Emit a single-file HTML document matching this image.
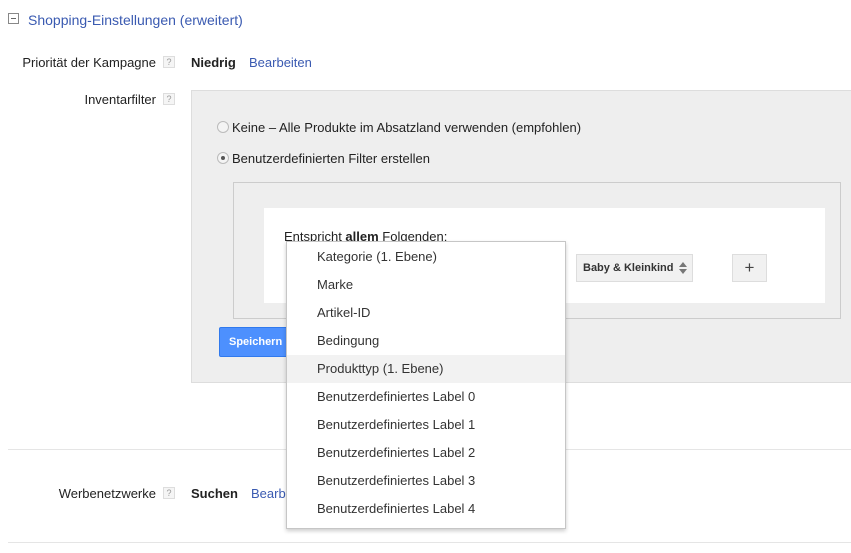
<!DOCTYPE html>
<html><head><meta charset="utf-8"><style>
*{margin:0;padding:0;box-sizing:border-box}
body{width:851px;height:553px;background:#fff;font-family:"Liberation Sans",Arial,sans-serif;font-size:13px;color:#222;position:relative;overflow:hidden}
.a{position:absolute;white-space:nowrap}
.q{position:absolute;width:12px;height:12px;border:1px solid #ddd;background:#f5f5f5;color:#999;font-size:9px;line-height:10px;text-align:center}
.lbl{position:absolute;right:695px;white-space:nowrap}
.blue{color:#3a5ab1}
.dd div{height:28px;line-height:28px;padding-left:30px;font-size:13px;color:#333}
</style></head><body>
<div class="a" style="left:8px;top:13px;width:11px;height:11px;border:1px solid #888;"><div style="position:absolute;left:2px;top:4px;width:5px;height:1px;background:#666"></div></div>
<div class="a blue" style="left:28px;top:12px;font-size:14px">Shopping-Einstellungen (erweitert)</div>

<div class="lbl" style="top:55px">Priorität der Kampagne</div>
<div class="q" style="left:163px;top:56px">?</div>
<div class="a" style="left:191px;top:55px;font-weight:bold">Niedrig</div>
<div class="a blue" style="left:249px;top:55px">Bearbeiten</div>

<div class="lbl" style="top:92px">Inventarfilter</div>
<div class="q" style="left:163px;top:93px">?</div>

<div class="a" style="left:191px;top:90px;width:670px;height:293px;background:#eee;border:1px solid #ddd"></div>
<div class="a" style="left:217px;top:121px;width:12px;height:12px;border-radius:50%;border:1px solid #bbb;background:#f4f4f4"></div>
<div class="a" style="left:232px;top:120px">Keine – Alle Produkte im Absatzland verwenden (empfohlen)</div>
<div class="a" style="left:217px;top:152px;width:12px;height:12px;border-radius:50%;border:1px solid #bbb;background:#f4f4f4"><div style="position:absolute;left:3px;top:3px;width:4px;height:4px;border-radius:50%;background:#555"></div></div>
<div class="a" style="left:232px;top:151px">Benutzerdefinierten Filter erstellen</div>

<div class="a" style="left:233px;top:182px;width:608px;height:137px;border:1px solid #ccc;background:#eee"></div>
<div class="a" style="left:264px;top:208px;width:561px;height:95px;background:#fff"></div>
<div class="a" style="left:284px;top:229px">Entspricht <b>allem</b> Folgenden:</div>
<div class="a" style="left:576px;top:254px;width:117px;height:28px;background:#f1f1f1;border:1px solid #ddd;font-size:11px;font-weight:bold;line-height:26px;padding-left:6px;color:#333">Baby &amp; Kleinkind</div>
<svg class="a" style="left:679px;top:262px" width="8" height="12"><path d="M0 5L4 0L8 5Z M0 7L4 12L8 7Z" fill="#777"/></svg>
<div class="a" style="left:732px;top:254px;width:35px;height:28px;background:#f1f1f1;border:1px solid #ddd;text-align:center;line-height:26px;font-size:17px;color:#444">+</div>

<div class="a" style="left:219px;top:327px;width:72px;height:30px;background:#4d90fe;border:1px solid #3079ed;border-radius:2px;color:#fff;font-weight:bold;font-size:11px;line-height:28px;padding-left:9px">Speichern</div>

<div class="a" style="left:8px;top:449px;width:843px;height:1px;background:#e5e5e5"></div>
<div class="a" style="left:8px;top:542px;width:843px;height:1px;background:#e5e5e5"></div>

<div class="lbl" style="top:486px">Werbenetzwerke</div>
<div class="q" style="left:163px;top:487px">?</div>
<div class="a" style="left:191px;top:486px;font-weight:bold">Suchen</div>
<div class="a blue" style="left:251px;top:486px">Bearbeiten</div>

<div class="a dd" style="left:286px;top:241px;width:280px;height:288px;background:#fff;border:1px solid #c6c6c6;box-shadow:0 2px 4px rgba(0,0,0,.2);padding-top:1px">
<div>Kategorie (1. Ebene)</div><div>Marke</div><div>Artikel-ID</div><div>Bedingung</div>
<div style="background:#f2f2f2">Produkttyp (1. Ebene)</div>
<div>Benutzerdefiniertes Label 0</div><div>Benutzerdefiniertes Label 1</div><div>Benutzerdefiniertes Label 2</div><div>Benutzerdefiniertes Label 3</div><div>Benutzerdefiniertes Label 4</div>
</div>
</body></html>
